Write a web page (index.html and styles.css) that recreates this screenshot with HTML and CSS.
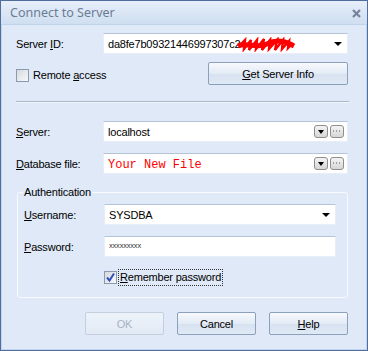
FILE: index.html
```html
<!DOCTYPE html>
<html lang="en">
<head>
    <meta charset="UTF-8">
    <title>Connect to Server</title>
    <link rel="stylesheet" href="styles.css">
</head>
<body>
<div class="window">
    <div class="titlebar">
        <span class="title">Connect to Server</span>
        <svg class="close" width="9" height="9" viewBox="0 0 9 9">
            <path d="M1 1 L8 8 M8 1 L1 8" stroke="#74839a" stroke-width="2.2" fill="none"/>
        </svg>
    </div>

    <div class="content">
        <div class="row">
            <label class="label">Server <u>I</u>D:</label>
            <div class="combo">
                <span class="value">da8fe7b09321446997307c2</span>
                <svg class="scribble" width="58" height="15" viewBox="0 0 58 15">
                    <path d="M1 9 C10 5 20 12 30 7 S 48 4 57 9" stroke="#f00" stroke-width="5" fill="none"/>
                    <path d="M3 8 L8 3 L7 12 L14 3 L12 13 L20 3 L19 12 L27 2 L25 13 L33 3 L32 12 L40 3 L38 13 L46 3 L45 12 L52 4 L51 11 L56 6" stroke="#f00" stroke-width="2.4" fill="none"/>
                </svg>
                <span class="arrow"></span>
            </div>
        </div>

        <div class="row-remote">
            <label class="check"><span class="box"></span><span>Remote <u>a</u>ccess</span></label>
            <button class="btn btn-info"><u>G</u>et Server Info</button>
        </div>

        <hr class="sep">

        <div class="row row-server">
            <label class="label"><u>S</u>erver:</label>
            <div class="combo">
                <span class="value">localhost</span>
                <span class="tool tool-drop"><span class="arrow-sm"></span></span>
                <span class="tool"><svg width="8" height="3" viewBox="0 0 8 3"><path d="M0 1h1M3 1h1M6 1h1" stroke="#555" stroke-width="1"/></svg></span>
            </div>
        </div>

        <div class="row row-db">
            <label class="label"><u>D</u>atabase file:</label>
            <div class="combo">
                <span class="value value-file">Your New File</span>
                <span class="tool tool-drop"><span class="arrow-sm"></span></span>
                <span class="tool"><svg width="8" height="3" viewBox="0 0 8 3"><path d="M0 1h1M3 1h1M6 1h1" stroke="#555" stroke-width="1"/></svg></span>
            </div>
        </div>

        <fieldset class="auth">
            <legend>Authentication</legend>
            <div class="auth-row">
                <label class="label"><u>U</u>sername:</label>
                <div class="combo">
                    <span class="value">SYSDBA</span>
                    <span class="arrow"></span>
                </div>
            </div>
            <div class="auth-row auth-pass">
                <label class="label"><u>P</u>assword:</label>
                <div class="combo">
                    <span class="value value-pass">xxxxxxxxx</span>
                </div>
            </div>
            <div class="auth-row auth-remember">
                <label class="check check-focus">
                    <span class="box box-on">
                        <svg width="11" height="11" viewBox="0 0 11 11">
                            <path d="M2 5.5 L4.5 8.5 L9 1.5" stroke="#3150c0" stroke-width="2" fill="none"/>
                        </svg>
                    </span>
                    <span class="focus"><u>R</u>emember password</span>
                </label>
            </div>
        </fieldset>

        <div class="actions">
            <button class="btn" disabled>OK</button>
            <button class="btn">Cancel</button>
            <button class="btn"><u>H</u>elp</button>
        </div>
    </div>
</div>
</body>
</html>
```

FILE: styles.css
```css
body {
    margin: 0;
    font-family: 'Liberation Sans', Arial, sans-serif;
    font-size: 11px;
    letter-spacing: -0.2px;
    color: #000;
}

.window {
    width: 368px;
    height: 351px;
    box-sizing: border-box;
    border: 1px solid #4f6e9c;
    box-shadow: inset 0 0 0 1px #c3d5ec;
    background: #dfe9f7;
    overflow: hidden;
}

.titlebar {
    height: 23px;
    display: flex;
    align-items: center;
    justify-content: space-between;
    padding: 0 6px 0 9px;
    background: linear-gradient(#e6eefa, #cfdef1);
    border-bottom: 1px solid #c0d3ea;
}

.title {
    font-family: 'Noto Sans', sans-serif;
    font-size: 12.5px;
    letter-spacing: 0;
    color: #6b7c93;
}

.close {
    margin-top: 1px;
}

.content {
    padding: 8px 19px 0 15px;
}

u {
    text-decoration: underline;
    text-underline-offset: 1px;
}

.row {
    display: grid;
    grid-template-columns: 87px 1fr;
    align-items: center;
}

.label {
    white-space: nowrap;
}

.combo {
    position: relative;
    height: 21px;
    box-sizing: border-box;
    background: #fff;
    border: 1px solid #e7eef8;
    border-top-color: #b5c3d6;
    display: flex;
    align-items: center;
    padding: 0 3px 0 4px;
}

.value {
    flex: 1;
    white-space: nowrap;
    overflow: hidden;
}

.value-file {
    font-family: 'Liberation Mono', monospace;
    font-size: 12px;
    letter-spacing: 0;
    color: #f00;
    padding-top: 2px;
}

.value-pass {
    font-size: 7.5px;
    color: #333;
    padding-bottom: 2px;
}

.scribble {
    position: absolute;
    left: 133px;
    top: 3px;
}

.arrow {
    width: 0;
    height: 0;
    border-left: 4px solid transparent;
    border-right: 4px solid transparent;
    border-top: 4px solid #000;
    margin-right: 2px;
}

.tool {
    width: 14px;
    height: 13px;
    box-sizing: border-box;
    border: 1px solid #8e8e8e;
    border-radius: 3px;
    background: linear-gradient(#f4f4f4, #d6d6d6);
    display: flex;
    align-items: center;
    justify-content: center;
}

.tool-drop {
    margin-right: 2px;
}

.arrow-sm {
    width: 0;
    height: 0;
    border-left: 3.5px solid transparent;
    border-right: 3.5px solid transparent;
    border-top: 4px solid #000;
}

.row-remote {
    display: flex;
    align-items: center;
    justify-content: space-between;
    margin-top: 8px;
}

.check {
    display: flex;
    align-items: center;
    gap: 4px;
    margin-top: 3px;
}

.box {
    width: 13px;
    height: 13px;
    box-sizing: border-box;
    border: 1px solid #8a9ab0;
    background: linear-gradient(135deg, #d6d9de, #f7f8fa);
    display: flex;
    align-items: center;
    justify-content: center;
}

.btn {
    width: 79px;
    height: 23px;
    box-sizing: border-box;
    font-family: inherit;
    font-size: 11px;
    letter-spacing: -0.2px;
    color: #000;
    border: 1px solid #8ba0bc;
    border-radius: 2px;
    background: linear-gradient(#f7f9fc, #e3ebf6 50%, #d7e2f1 51%, #e0e9f5);
    padding: 0;
}

.btn:disabled {
    color: #a7b2c2;
    border-color: #c3cfdf;
    background: linear-gradient(#eef3fa, #e2eaf5);
}

.btn-info {
    width: 140px;
}

.sep {
    margin: 16px -1px 0 0;
    border: 0;
    border-top: 1px solid #a8b6c8;
    border-bottom: 1px solid #f3f7fc;
}

.row-server {
    margin-top: 18px;
}

.row-db {
    margin-top: 11px;
}

.auth {
    margin: 11px 0 0 1px;
    padding: 5px 11px 12px 6px;
    border: 1px solid #f7faff;
    border-radius: 3px;
}

.auth legend {
    padding: 0 1px;
    margin-left: -1px;
    line-height: 14px;
}

.auth-row {
    display: grid;
    grid-template-columns: 80px 1fr;
    align-items: center;
}

.auth-pass {
    margin-top: 11px;
}

.auth-remember {
    margin-top: 13px;
}

.auth-remember .check {
    grid-column: 2;
    margin-top: 0;
    gap: 2px;
}

.focus {
    outline: 1px dotted #333;
    padding: 1px 1px 2px;
}

.actions {
    display: flex;
    justify-content: flex-end;
    gap: 13px;
    margin-top: 14px;
}
```
